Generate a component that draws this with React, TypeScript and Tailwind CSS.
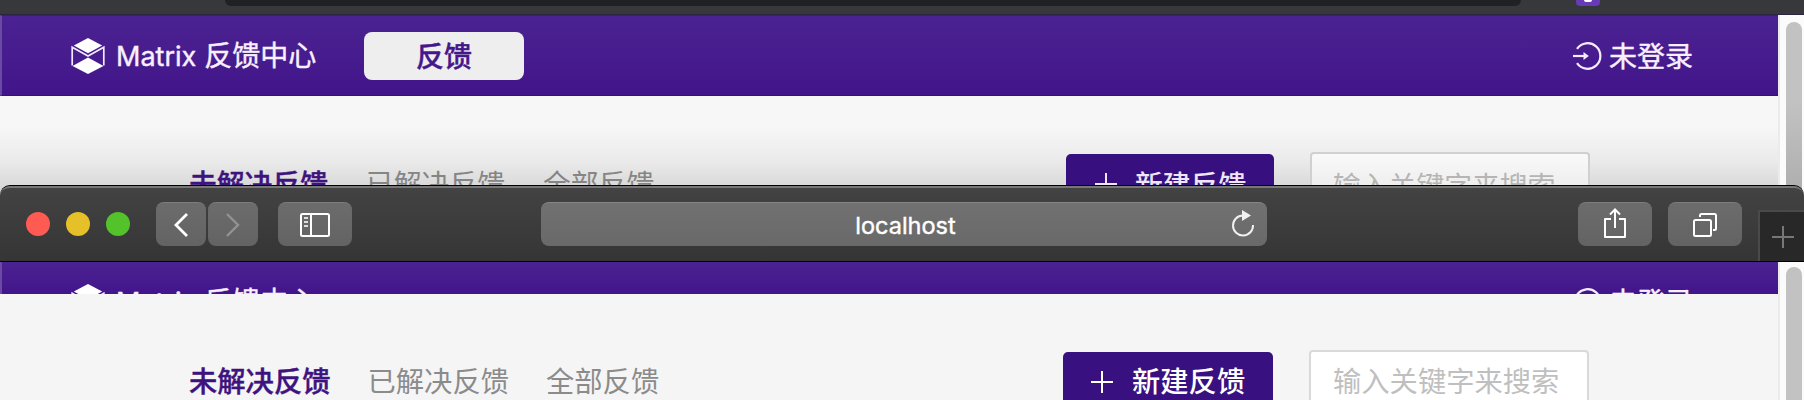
import React from "react";

const Logo = () => (
  <svg className="block h-9 w-[34px] shrink-0" viewBox="0 0 34 36">
    <path fill="#fff" d="M17 0 31.2 7.6 17 15.2 2.8 7.6Z" />
    <path fill="#fff" d="M17 19.5 32.5 28 17 36 1.5 28Z" />
    <path fill="none" stroke="#f3e8ff" strokeWidth="1.7" d="M1.2 27.5V9.3L17 18 32.8 9.3v18.2" />
  </svg>
);

const LoginIcon = () => (
  <svg className="block h-7 w-[29px] shrink-0" viewBox="0 0 29 28" fill="none" stroke="#f7ecff" strokeWidth="2.2">
    <path d="M4 6.8A12.8 12.8 0 1 1 4 21.2" />
    <path d="M0 14h11.500" />
    <path d="M10.500 10 15.800 14l-5.300 4Z" fill="#f7ecff" stroke="none" />
  </svg>
);

function Header({ showButton }: { showButton?: boolean }) {
  return (
    <div className="flex h-[82px] items-center pl-[71px] pr-[85px] text-[28px] leading-none text-[#f9f0ff] [-webkit-text-stroke:0.4px]">
      <Logo />
      <span className="ml-[11px] w-[200px] whitespace-nowrap pb-0.5">
        <span className="font-[Inter,sans-serif] text-[27px]">Matrix</span>
        <span className="ml-2">反馈中心</span>
      </span>
      {showButton && (
        <span className="ml-12 flex h-12 w-40 items-center justify-center rounded-lg bg-[#efeeef] pb-0.5 font-medium text-[#45178b]">
          反馈
        </span>
      )}
      <span className="ml-auto flex items-center gap-[7px]">
        <LoginIcon />
        <span className="pb-0.5">未登录</span>
      </span>
    </div>
  );
}

function Plus({ className }: { className: string }) {
  return (
    <svg className={className} viewBox="0 0 22 22" stroke="currentColor" strokeWidth="2">
      <path d="M11 0v22M0 11h22" />
    </svg>
  );
}

function ScrollTrack({ className }: { className: string }) {
  return (
    <div className="flex w-[26px] shrink-0 justify-end border-l-2 border-[#ebebeb] bg-[#fbfbfb] pr-0.5">
      <div className={className} />
    </div>
  );
}

function BackWindow() {
  return (
    <section className="flex h-[197px] flex-col overflow-hidden bg-[#f5f5f5]">
      <div className="flex h-[15px] shrink-0 items-start border-b border-[#2b2540] bg-[#37383c] pl-[225px]">
        <div className="h-1.5 w-[1296px] rounded-b-full bg-[#202125]" />
        <div className="ml-[55px] flex h-1.5 w-6 justify-center rounded-b bg-[#673ab7]">
          <div className="h-0.5 w-2 rounded-b-full bg-white" />
        </div>
      </div>
      <div className="flex flex-1">
        <div className="flex-1">
          <div className="h-[81px] border-b border-l-2 border-t border-b-[#35146c] border-l-[#6b4aa6] border-t-[#3a2264] bg-linear-to-b from-[#4b2292] to-[#42158a]">
            <div className="-ml-0.5 -mt-px">
              <Header showButton />
            </div>
          </div>
          <div className="flex h-[101px] items-start bg-linear-to-b from-[#f7f7f7] from-30% via-[#eaeaea] via-65% to-[#d2d2d2] pl-[190px] pt-14 text-[27.800px] leading-none">
            <div className="flex w-[876px] gap-[38px] pt-[17px] text-[#858585]">
              <span className="-ml-px font-medium text-[#3e137d] [-webkit-text-stroke:0.4px]">未解决反馈</span>
              <span>已解决反馈</span>
              <span>全部反馈</span>
            </div>
            <div className="mt-0.5 flex h-[60px] w-52 shrink-0 items-center gap-[18px] rounded-[5px] bg-[#370f7e] pl-[29px] font-medium text-[#eee5f7]">
              <Plus className="h-[22px] w-[22px]" />
              新建反馈
            </div>
            <div className="ml-9 flex h-[66px] w-[280px] shrink-0 items-center rounded border-2 border-[#d0d0d0] bg-linear-to-b from-[#f9f9f9] to-[#e4e4e4] pl-[21px] text-[#b5b5b5]">
              输入关键字来搜索
            </div>
          </div>
        </div>
        <ScrollTrack className="mt-[7px] h-[200px] w-4 rounded-t-full bg-linear-to-b from-[#c2c2c2] from-40% to-[#a8a8a8]" />
      </div>
    </section>
  );
}

const tool =
  "flex h-11 items-center justify-center rounded-lg border-t border-[#7d7d7d] bg-linear-to-b from-[#6c6c6c] to-[#636363] text-white";

function Toolbar() {
  return (
    <div className="flex h-[77px] shrink-0 rounded-t-[10px] border-t border-b border-black bg-linear-to-b from-[#434343] to-[#353535]">
      <div className="flex flex-1 items-start rounded-t-[10px] border-t-2 border-[#777] pt-3.5">
        <div className="flex h-11 w-[156px] items-center gap-4 pl-[26px]">
          <i className="h-6 w-6 rounded-full bg-[#ff5b52]" />
          <i className="h-6 w-6 rounded-full bg-[#e6c029]" />
          <i className="h-6 w-6 rounded-full bg-[#53c22b]" />
        </div>
        <div className={`${tool} w-[50px]`}>
          <svg className="h-6 w-4" viewBox="0 0 16 24" fill="none" stroke="currentColor" strokeWidth="2.800">
            <path d="M14 1 3 12l11 11" />
          </svg>
        </div>
        <div className={`${tool} ml-0.5 w-[50px]`}>
          <svg className="h-6 w-4" viewBox="0 0 16 24" fill="none" stroke="#929292" strokeWidth="2.400">
            <path d="M2 1 13 12 2 23" />
          </svg>
        </div>
        <div className={`${tool} ml-5 w-[74px]`}>
          <svg className="h-6 w-[30px]" viewBox="0 0 30 24" fill="none" stroke="currentColor" strokeWidth="2">
            <rect x="1" y="1" width="28" height="22" rx="1.500" />
            <path d="M11 1v22" />
            <path d="M4 5h4M4 9h4M4 13h4" stroke="#ddd" strokeWidth="1.800" />
          </svg>
        </div>
        <div className="ml-[189px] grid h-11 w-[726px] grid-cols-[1fr_auto_1fr] items-center rounded-lg border-t border-[#868686] bg-linear-to-b from-[#717171] to-[#696969] pr-3">
          <span />
          <span className="pl-[15px] pt-0.5 font-[Inter,sans-serif] text-[23.500px] leading-none text-white [-webkit-text-stroke:0.4px]">
            localhost
          </span>
          <svg className="mb-0.5 h-7 w-6 justify-self-end" viewBox="0 0 24 28" fill="none" stroke="#f0f0f0" strokeWidth="2">
            <path d="M12 5.500A10 10 0 1 0 22 15" />
            <path d="M11 0 20 5.500 11 11Z" fill="#f0f0f0" stroke="none" />
          </svg>
        </div>
        <div className={`${tool} ml-[311px] w-[74px]`}>
          <svg className="mb-1 h-[30px] w-[22px]" viewBox="0 0 22 30" fill="none" stroke="currentColor" strokeWidth="2">
            <path d="M7 11H1v18h20V11h-6" strokeLinejoin="round" />
            <path d="M11 20V1.500M6 6.500l5-5 5 5" />
          </svg>
        </div>
        <div className={`${tool} ml-4 w-[74px]`}>
          <svg className="h-6 w-6" viewBox="0 0 24 24" fill="none" stroke="currentColor" strokeWidth="2">
            <rect x="1" y="7" width="17" height="16" rx="1.500" />
            <path d="M7 4V2.500Q7 1 8.500 1h13Q23 1 23 2.500v13q0 1.500-1.500 1.500H20" />
          </svg>
        </div>
        <div className="-mb-1 ml-4 mt-2 flex h-[51px] flex-1 items-center border-l-2 border-t-2 border-[#4a4a4a] bg-[#282828] pl-3 text-[#777]">
          <Plus className="h-[22px] w-[22px]" />
        </div>
      </div>
    </div>
  );
}

function FrontWindow() {
  return (
    <section className="relative -mt-3 flex h-[215px] flex-col overflow-hidden">
      <Toolbar />
      <div className="flex min-h-0 flex-1 bg-[#f5f5f5]">
        <div className="flex-1">
          <div className="h-8 overflow-hidden border-l-2 border-[#6b4aa6] bg-linear-to-b from-[#4b2292] to-[#42158a]">
            <div className="-ml-0.5 -mt-px">
              <Header />
            </div>
          </div>
          <div className="flex h-[106px] items-start overflow-hidden pl-[190px] pt-14 text-[28.300px] leading-none">
            <div className="flex w-[873px] gap-[37px] pt-4 text-[#8b8b8b]">
              <span className="-ml-px font-medium text-[#3e137d] [-webkit-text-stroke:0.4px]">未解决反馈</span>
              <span>已解决反馈</span>
              <span>全部反馈</span>
            </div>
            <div className="mt-0.5 flex h-[60px] w-[210px] shrink-0 items-center gap-[19px] rounded-[5px] bg-[#391080] pl-7 font-medium text-white">
              <Plus className="h-[22px] w-[22px]" />
              <span className="pb-[3px]">新建反馈</span>
            </div>
            <div className="ml-9 flex h-[62px] w-[280px] shrink-0 items-center rounded border-2 border-b-0 border-[#d9d9d9] bg-white pb-[3px] pl-[22px] text-[#bfbfbf]">
              输入关键字来搜索
            </div>
          </div>
        </div>
        <ScrollTrack className="mt-[5px] h-[200px] w-4 rounded-t-full bg-[#c2c2c2]" />
      </div>
    </section>
  );
}

export default function App() {
  return (
    <main className="h-[400px] w-[1804px] overflow-hidden bg-[#f5f5f5] font-['Noto_Sans_CJK_SC',sans-serif]">
      <BackWindow />
      <FrontWindow />
    </main>
  );
}
